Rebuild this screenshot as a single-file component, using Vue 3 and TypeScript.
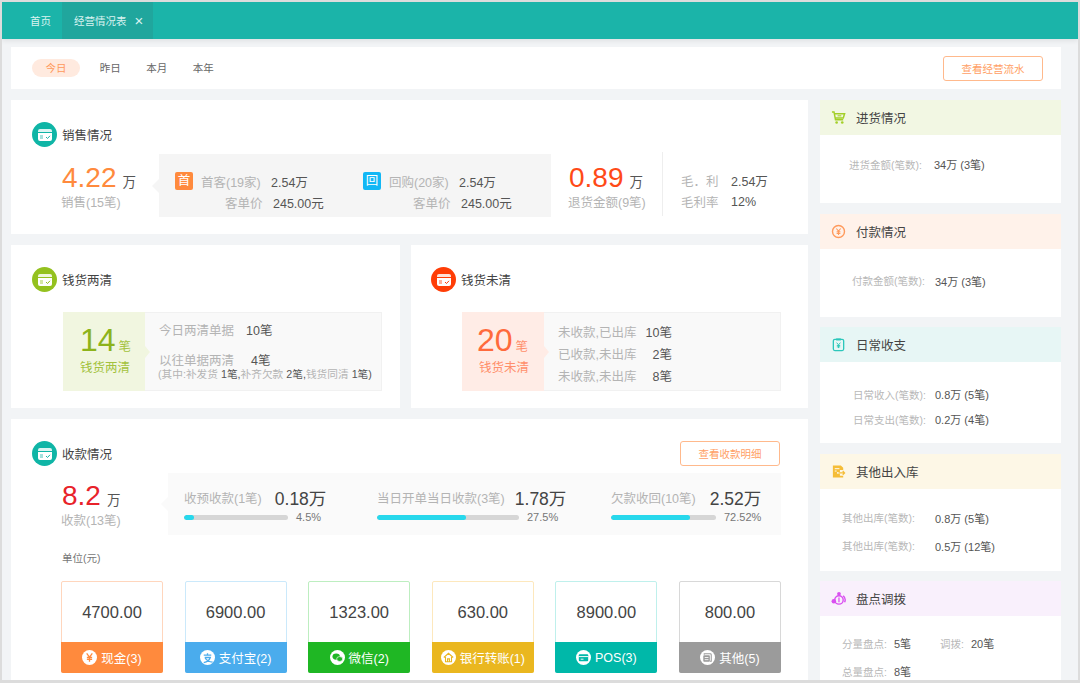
<script setup lang="ts">
interface Collect {
  label: string
  value: string
  percent: string
  fill: number
  kind: string
}

interface Pay {
  amount: string
  label: string
  kind: string
}

const collects: Collect[] = [
  { label: '收预收款(1笔)', value: '0.18万', percent: '4.5%', fill: 10, kind: 'one' },
  { label: '当日开单当日收款(3笔)', value: '1.78万', percent: '27.5%', fill: 63, kind: 'two' },
  { label: '欠款收回(10笔)', value: '2.52万', percent: '72.52%', fill: 75, kind: 'three' },
]

const pays: Pay[] = [
  { amount: '4700.00', label: '现金(3)', kind: 'cash' },
  { amount: '6900.00', label: '支付宝(2)', kind: 'ali' },
  { amount: '1323.00', label: '微信(2)', kind: 'wx' },
  { amount: '630.00', label: '银行转账(1)', kind: 'bank' },
  { amount: '8900.00', label: 'POS(3)', kind: 'pos' },
  { amount: '800.00', label: '其他(5)', kind: 'other' },
]

const uncleared = [
  { label: '未收款,已出库', value: '10笔' },
  { label: '已收款,未出库', value: '2笔' },
  { label: '未收款,未出库', value: '8笔' },
]
</script>

<template>
  <div class="page">
    <header class="tabs">
      <span class="tab">首页</span>
      <span class="tab tab--active">经营情况表<i class="tab__close">×</i></span>
    </header>

    <div class="content">
      <section class="filter">
        <span class="filter__item filter__item--on">今日</span>
        <span class="filter__item">昨日</span>
        <span class="filter__item">本月</span>
        <span class="filter__item">本年</span>
        <button class="btn filter__btn" type="button">查看经营流水</button>
      </section>

      <div class="columns">
        <div class="main">
          <section class="card card--sales">
            <div class="title">
              <span class="title__icon title__icon--teal">
                <svg viewBox="0 0 14 12" width="14" height="12"><path d="M2 0h10a2 2 0 0 1 2 2v1H0V2a2 2 0 0 1 2-2z" fill="#fff" opacity=".85" /><path d="M0 4h14v6a2 2 0 0 1-2 2H2a2 2 0 0 1-2-2z" fill="#fff" /><path d="M2 7h3M2 9h3" stroke="#1bb4a9" stroke-width=".8" /><path d="M8 8l1.5 1.5L12 6.8" stroke="#1bb4a9" stroke-width="1" fill="none" /></svg>
              </span>
              销售情况
            </div>
            <div class="sales">
              <div class="stat stat--sale">
                <div class="stat__num"><b class="c-orange">4.22</b><span>万</span></div>
                <div class="stat__sub">销售(15笔)</div>
              </div>
              <div class="mix has-arrow">
                <div class="mix__col">
                  <div class="mix__top">
                    <span class="mix__badge mix__badge--orange">首</span>
                    <span class="mix__label">首客(19家)</span>
                    <span class="val">2.54万</span>
                  </div>
                  <div class="mix__bottom"><span class="mix__price">客单价</span><span class="val">245.00元</span></div>
                </div>
                <div class="mix__col">
                  <div class="mix__top">
                    <span class="mix__badge mix__badge--blue">回</span>
                    <span class="mix__label">回购(20家)</span>
                    <span class="val">2.54万</span>
                  </div>
                  <div class="mix__bottom"><span class="mix__price">客单价</span><span class="val">245.00元</span></div>
                </div>
              </div>
              <div class="stat stat--back">
                <div class="stat__num"><b class="c-red">0.89</b><span>万</span></div>
                <div class="stat__sub">退货金额(9笔)</div>
              </div>
              <div class="gross">
                <div class="gross__row"><span class="gross__label">毛．利</span><span class="val">2.54万</span></div>
                <div class="gross__row"><span class="gross__label">毛利率</span><span class="val">12%</span></div>
              </div>
            </div>
          </section>

          <div class="pair">
            <section class="card card--clear">
              <div class="title">
                <span class="title__icon title__icon--green">
                  <svg viewBox="0 0 14 12" width="14" height="12"><path d="M2 0h10a2 2 0 0 1 2 2v1H0V2a2 2 0 0 1 2-2z" fill="#fff" opacity=".85" /><path d="M0 4h14v6a2 2 0 0 1-2 2H2a2 2 0 0 1-2-2z" fill="#fff" /><path d="M2 7h3M2 9h3" stroke="#94c11f" stroke-width=".8" /><path d="M8 8l1.5 1.5L12 6.8" stroke="#94c11f" stroke-width="1" fill="none" /></svg>
                </span>
                钱货两清
              </div>
              <div class="box">
                <div class="box__lead box__lead--green">
                  <div class="box__num"><b>14</b><span>笔</span></div>
                  <div class="box__name">钱货两清</div>
                </div>
                <div class="box__body box__body--clear">
                  <div class="line"><span class="line__label">今日两清单据</span><span class="val line__val">10笔</span></div>
                  <div class="line line--old"><span class="line__label">以往单据两清</span><span class="val line__val line__val--far">4笔</span></div>
                  <div class="note">(其中:补发货 <em>1笔,</em>补齐欠款 <em>2笔,</em>钱货同清 <em>1笔)</em></div>
                </div>
              </div>
            </section>

            <section class="card card--unclear">
              <div class="title">
                <span class="title__icon title__icon--red">
                  <svg viewBox="0 0 14 12" width="14" height="12"><path d="M2 0h10a2 2 0 0 1 2 2v1H0V2a2 2 0 0 1 2-2z" fill="#fff" opacity=".85" /><path d="M0 4h14v6a2 2 0 0 1-2 2H2a2 2 0 0 1-2-2z" fill="#fff" /><path d="M2 7h3M2 9h3" stroke="#ff3d06" stroke-width=".8" /><path d="M8 8l1.5 1.5L12 6.8" stroke="#ff3d06" stroke-width="1" fill="none" /></svg>
                </span>
                钱货未清
              </div>
              <div class="box">
                <div class="box__lead box__lead--red">
                  <div class="box__num"><b>20</b><span>笔</span></div>
                  <div class="box__name">钱货未清</div>
                </div>
                <div class="box__body box__body--unclear">
                  <div v-for="row in uncleared" :key="row.label" class="urow">
                    <span class="line__label">{{ row.label }}</span>
                    <span class="val urow__val">{{ row.value }}</span>
                  </div>
                </div>
              </div>
            </section>
          </div>

          <section class="card card--collect">
            <div class="title">
              <span class="title__icon title__icon--teal">
                <svg viewBox="0 0 14 12" width="14" height="12"><path d="M2 0h10a2 2 0 0 1 2 2v1H0V2a2 2 0 0 1 2-2z" fill="#fff" opacity=".85" /><path d="M0 4h14v6a2 2 0 0 1-2 2H2a2 2 0 0 1-2-2z" fill="#fff" /><path d="M2 7h3M2 9h3" stroke="#1bb4a9" stroke-width=".8" /><path d="M8 8l1.5 1.5L12 6.8" stroke="#1bb4a9" stroke-width="1" fill="none" /></svg>
              </span>
              收款情况
              <button class="btn title__btn" type="button">查看收款明细</button>
            </div>
            <div class="income">
              <div class="stat stat--income">
                <div class="stat__num"><b class="c-crimson">8.2</b><span>万</span></div>
                <div class="stat__sub">收款(13笔)</div>
              </div>
              <div class="progress has-arrow">
                <div v-for="c in collects" :key="c.label" class="prog" :class="`prog--${c.kind}`">
                  <div class="prog__top">
                    <span class="prog__label">{{ c.label }}</span>
                    <span class="prog__val">{{ c.value }}</span>
                  </div>
                  <div class="prog__bottom">
                    <span class="prog__bar"><i :style="{ width: c.fill + '%' }"></i></span>
                    <span class="prog__pct">{{ c.percent }}</span>
                  </div>
                </div>
              </div>
            </div>
            <div class="unit">单位(元)</div>
            <div class="pays">
              <div v-for="p in pays" :key="p.kind" class="pay" :class="`pay--${p.kind}`">
                <div class="pay__amount">{{ p.amount }}</div>
                <div class="pay__foot">
                  <svg class="pay__icon" viewBox="0 0 16 16" width="15" height="15">
                    <circle cx="8" cy="8" r="8" fill="#fff" />
                    <path v-if="p.kind === 'cash'" d="M5 3.5L8 7.5L11 3.5M8 7.5V12.5M5.2 8h5.6M5.2 10h5.6" stroke="#ff8a3d" stroke-width="1.4" fill="none" />
                    <path v-else-if="p.kind === 'ali'" d="M4 5.5h8M8 3.5v2M5 8h6c-1 3-3.5 4.8-7 5.5M5.5 8.5c1.5 2.5 4 4 8 4.5" stroke="#4aaced" stroke-width="1.4" fill="none" />
                    <g v-else-if="p.kind === 'wx'" fill="#1fb724">
                      <ellipse cx="6.6" cy="7" rx="4" ry="3.3" />
                      <ellipse cx="10.3" cy="9.6" rx="3.2" ry="2.6" stroke="#fff" stroke-width=".7" />
                    </g>
                    <path v-else-if="p.kind === 'bank'" d="M3 8l5-4.5L13 8M4.8 7.5V12.5H11.2V7.5M7 12.5V9.5H9V12.5" stroke="#eab71f" stroke-width="1.2" fill="none" />
                    <g v-else-if="p.kind === 'pos'">
                      <rect x="3" y="4.5" width="10" height="7.5" rx="1" fill="#00b8a9" />
                      <path d="M3 7h10" stroke="#fff" stroke-width="1" />
                      <path d="M5 9.8h3" stroke="#fff" stroke-width="1" />
                    </g>
                    <g v-else>
                      <path d="M4.5 5V4h6.5a1 1 0 0 1 1 1v7h-1.5" stroke="#9b9b9b" stroke-width="1.1" fill="none" />
                      <rect x="3.5" y="5.5" width="7" height="7" rx="1" fill="#9b9b9b" />
                      <path d="M5 8h4M5 10.3h4" stroke="#fff" stroke-width=".9" />
                    </g>
                  </svg>
                  {{ p.label }}
                </div>
              </div>
            </div>
          </section>
        </div>

        <aside class="side">
          <section class="scard scard--buy">
            <div class="scard__head">
              <svg viewBox="0 0 16 16" width="15" height="15" class="scard__icon"><path d="M1 2h2.2l1.6 8.5h8.2M4 4h10.5l-1.4 4.6H4.8" stroke="#a3cf28" stroke-width="1.6" fill="none" /><path d="M7 6.2h4" stroke="#a3cf28" stroke-width="1.2" /><circle cx="6" cy="13.3" r="1.4" fill="#a3cf28" /><circle cx="12" cy="13.3" r="1.4" fill="#a3cf28" /></svg>
              进货情况
            </div>
            <div class="scard__body">
              <div class="srow"><span>进货金额(笔数):</span><b>34万 (3笔)</b></div>
            </div>
          </section>

          <section class="scard scard--payout">
            <div class="scard__head">
              <svg viewBox="0 0 16 16" width="15" height="15" class="scard__icon"><circle cx="8" cy="8" r="6.4" stroke="#ff9a5c" stroke-width="1.5" fill="none" /><path d="M5.7 4.8L8 7.6l2.3-2.8M8 7.6v4M6 8.3h4M6 10h4" stroke="#ff9a5c" stroke-width="1.1" fill="none" /></svg>
              付款情况
            </div>
            <div class="scard__body">
              <div class="srow"><span>付款金额(笔数):</span><b>34万 (3笔)</b></div>
            </div>
          </section>

          <section class="scard scard--daily">
            <div class="scard__head">
              <svg viewBox="0 0 16 16" width="15" height="15" class="scard__icon"><rect x="2.5" y="2.5" width="11" height="12" rx="1.6" stroke="#2cc7bb" stroke-width="1.4" fill="none" /><path d="M5.5 1.5h5v2.2h-5z" fill="#2cc7bb" /><path d="M6 6l2 2.4L10 6M8 8.4v3.4M6.2 9h3.6M6.2 10.5h3.6" stroke="#2cc7bb" stroke-width="1" fill="none" /></svg>
              日常收支
            </div>
            <div class="scard__body">
              <div class="srow"><span>日常收入(笔数):</span><b>0.8万 (5笔)</b></div>
              <div class="srow"><span>日常支出(笔数):</span><b>0.2万 (4笔)</b></div>
            </div>
          </section>

          <section class="scard scard--other">
            <div class="scard__head">
              <svg viewBox="0 0 16 16" width="15" height="15" class="scard__icon"><path d="M2 1.5h8.5L13 4v2.5H9.5v2H6.5v2h3v2H13V14.5H2z" fill="#f5bd37" /><path d="M4 5h5M4 7.500h2" stroke="#fff" stroke-width="1" /><path d="M8 9.500h6.500M12.500 7.500l2 2-2 2" stroke="#f5bd37" stroke-width="1.300" fill="none" /></svg>
              其他出入库
            </div>
            <div class="scard__body">
              <div class="srow"><span>其他出库(笔数):</span><b>0.8万 (5笔)</b></div>
              <div class="srow"><span>其他出库(笔数):</span><b>0.5万 (12笔)</b></div>
            </div>
          </section>

          <section class="scard scard--stock">
            <div class="scard__head">
              <svg viewBox="0 0 16 16" width="15" height="15" class="scard__icon"><circle cx="8.500" cy="3" r="2" fill="#d94ff0" /><circle cx="3" cy="11" r="2.400" fill="#d94ff0" /><circle cx="8.500" cy="9.500" r="4.500" stroke="#d94ff0" stroke-width="1.500" fill="none" /><path d="M13 5a6 6 0 0 1 1.500 7" stroke="#d94ff0" stroke-width="1.500" fill="none" /><path d="M8.500 7v5" stroke="#d94ff0" stroke-width="1.300" /></svg>
              盘点调拨
            </div>
            <div class="scard__body">
              <div class="srow">
                <span>分量盘点:</span><b>5笔</b>
                <span class="srow__more">调拨:</span><b>20笔</b>
              </div>
              <div class="srow"><span>总量盘点:</span><b>8笔</b></div>
            </div>
          </section>
        </aside>
      </div>
    </div>
  </div>
</template>

<style>
html,
body {
  margin: 0;
  overflow: hidden;
}
</style>

<style scoped>
.page {
  box-sizing: border-box;
  width: 1080px;
  height: 683px;
  overflow: hidden;
  border-style: solid;
  border-color: #dcdcdc;
  border-width: 2px 2px 3px 2px;
  background: #f2f4f6;
  font-family: "Liberation Sans", "Noto Sans CJK SC", sans-serif;
  color: #444;
  display: flex;
  flex-direction: column;
}

/* tabs */
.tabs {
  flex: none;
  height: 37px;
  background: #1bb4a9;
  display: flex;
  color: #d9f3f0;
  font-size: 10.5px;
  box-shadow: 0 2px 5px rgba(0, 0, 0, 0.08);
}
.tab {
  display: flex;
  align-items: center;
  padding: 0 11px 0 28px;
}
.tab--active {
  margin-left: 0;
  padding: 0 10px 0 12px;
  background: #20a69d;
}
.tab__close {
  font-style: normal;
  font-size: 15px;
  font-weight: 300;
  margin-left: 8px;
}

.content {
  flex: 1;
  min-height: 0;
  padding: 8px 17px 0 9px;
  display: flex;
  flex-direction: column;
  gap: 11px;
}

/* filter */
.filter {
  flex: none;
  height: 42px;
  background: #fff;
  display: flex;
  align-items: center;
  padding: 0 18px 0 21px;
  font-size: 10.5px;
  color: #666;
}
.filter__item {
  width: 46.500px;
  line-height: 18px;
  text-align: center;
}
.filter__item--on {
  width: 48px;
  margin-right: 0;
  background: #ffeadf;
  border-radius: 9px;
  color: #ff9a5c;
}
.filter__item--on + .filter__item {
  margin-left: 7px;
}
.filter__btn {
  margin-left: auto;
}

.btn {
  box-sizing: border-box;
  width: 100px;
  height: 25px;
  border: 1px solid #ffb98c;
  border-radius: 3px;
  background: #fff;
  color: #ff9f66;
  font: inherit;
  font-size: 10.500px;
  padding: 0;
}

.columns {
  flex: 1;
  min-height: 0;
  display: flex;
  gap: 12px;
}
.main {
  width: 797px;
  display: flex;
  flex-direction: column;
  gap: 11px;
}
.side {
  width: 241px;
  display: flex;
  flex-direction: column;
  gap: 10.500px;
}

.card {
  background: #fff;
  box-sizing: border-box;
  padding: 22px 0 0 21px;
}
.card--sales {
  height: 134px;
  flex: none;
}
.pair {
  flex: none;
  height: 163px;
  display: flex;
  gap: 11px;
}
.card--clear {
  width: 389px;
}
.card--unclear {
  flex: 1;
  padding-left: 20px;
}
.card--collect {
  flex: 1;
  min-height: 0;
}

.title {
  height: 25px;
  display: flex;
  align-items: center;
  font-size: 12.500px;
  color: #444;
}
.title__icon {
  width: 25px;
  height: 25px;
  border-radius: 50%;
  margin-right: 5px;
  display: flex;
  align-items: center;
  justify-content: center;
}
.title__icon--teal {
  background: #0fb5a6;
}
.title__icon--green {
  background: #94c11f;
}
.title__icon--red {
  background: #ff3d06;
}
.title__btn {
  margin-left: auto;
  margin-right: 28px;
}

.val {
  color: #555;
  font-size: 12.500px;
  white-space: nowrap;
}

/* big stat */
.stat__num {
  display: flex;
  align-items: baseline;
  height: 32px;
  line-height: 32px;
}
.stat__num b {
  font-weight: 400;
  font-size: 28px;
}
.stat__num span {
  font-size: 13.500px;
  color: #555;
  margin-left: 6px;
}
.stat__sub {
  font-size: 12.500px;
  color: #b4b4b4;
  line-height: 18px;
  margin-left: -1px;
  white-space: nowrap;
}
.c-orange {
  color: #ff8a3d;
}
.c-red {
  color: #ff4a17;
}
.c-crimson {
  color: #e8222a;
}

.sales {
  display: flex;
  margin-top: 7px;
  height: 63px;
}
.stat--sale {
  width: 127px;
  padding: 8px 0 0 30px;
  box-sizing: border-box;
}
.has-arrow {
  position: relative;
}
.has-arrow::before {
  content: "";
  position: absolute;
  left: -7px;
  top: 50%;
  margin-top: -7px;
  border-style: solid;
  border-width: 7px 7px 7px 0;
  border-color: transparent #f5f5f5 transparent transparent;
}
.mix {
  width: 392px;
  background: #f5f5f5;
  display: flex;
  box-sizing: border-box;
  padding: 18px 0 0 16px;
}
.mix__col {
  width: 196px;
}
.mix__top {
  display: flex;
  align-items: center;
  height: 18px;
}
.mix__badge {
  width: 18px;
  height: 18px;
  border-radius: 2px;
  color: #fff;
  font-size: 12.500px;
  line-height: 18px;
  text-align: center;
  margin-right: 8px;
}
.mix__badge--orange {
  background: #ff8a3d;
}
.mix__badge--blue {
  background: #12b7f5;
}
.mix__label {
  width: 70px;
  font-size: 12.500px;
  color: #b4b4b4;
  white-space: nowrap;
}
.mix__bottom {
  display: flex;
  align-items: center;
  padding: 3px 0 0 50px;
}
.mix__price {
  width: 48px;
  font-size: 12.500px;
  color: #b4b4b4;
}
.stat--back {
  width: 111px;
  box-sizing: border-box;
  padding: 8px 0 0 18px;
}
.gross {
  margin-top: -2px;
  height: 64px;
  border-left: 1px solid #eee;
  padding: 18px 0 0 18px;
  box-sizing: border-box;
}
.gross__row {
  display: flex;
  align-items: center;
  height: 21px;
}
.gross__label {
  width: 50px;
  font-size: 12.500px;
  color: #b4b4b4;
}

/* clear boxes */
.box {
  display: flex;
  width: 319px;
  height: 79px;
  margin: 20px 0 0 31px;
  background: #f9f9f9;
  outline: 1px solid #f1f1f1;
  outline-offset: -1px;
}
.box__lead {
  position: relative;
  width: 82px;
  box-sizing: border-box;
  padding: 9px 0 0 17px;
}
.box__lead::after {
  content: "";
  position: absolute;
  right: -5px;
  top: 50%;
  margin-top: -6px;
  border-style: solid;
  border-width: 6px 0 6px 5px;
  border-color: transparent;
}
.box__lead--green {
  background: #f1f6e0;
  color: #a3c23d;
}
.box__lead--green::after {
  border-left-color: #f1f6e0;
}
.box__lead--red {
  background: #ffece6;
  color: #ff8f6b;
  padding-left: 15px;
}
.box__lead--red::after {
  border-left-color: #ffece6;
}
.box__num {
  display: flex;
  align-items: baseline;
  height: 38px;
  line-height: 38px;
}
.box__num b {
  font-weight: 400;
  font-size: 32px;
}
.box__lead--green b {
  color: #8db31b;
}
.box__lead--red b {
  color: #ff6a3c;
}
.box__num span {
  font-size: 12.500px;
  margin-left: 3px;
}
.box__name {
  font-size: 12.500px;
  line-height: 18px;
  white-space: nowrap;
}
.box__lead--red .box__name {
  padding-left: 2px;
}
.box__body {
  flex: 1;
  box-sizing: border-box;
}
.box__body--clear {
  padding: 8px 0 0 14px;
}
.box__body--unclear {
  padding: 8px 0 0 14px;
}
.line {
  display: flex;
  align-items: center;
  height: 18px;
}
.line--old {
  margin-top: 12px;
}
.line__label {
  font-size: 12.500px;
  color: #b4b4b4;
  white-space: nowrap;
}
.line__val {
  margin-left: 12px;
}
.line__val--far {
  margin-left: 17px;
}
.note {
  font-size: 10.700px;
  color: #b4b4b4;
  line-height: 12px;
  margin-left: -1px;
  white-space: nowrap;
}
.note em {
  font-style: normal;
  color: #555;
}
.urow {
  display: flex;
  align-items: center;
  height: 22px;
  width: 114px;
  justify-content: space-between;
}
.urow__val {
  text-align: right;
}

/* collect */
.income {
  display: flex;
  margin-top: 7px;
  height: 62px;
}
.stat--income {
  width: 136px;
  box-sizing: border-box;
  padding: 7px 0 0 30px;
}
.progress {
  width: 613px;
  background: #fafafa;
  display: flex;
  box-sizing: border-box;
  padding: 12px 0 0 16px;
}
.has-arrow.progress::before {
  border-right-color: #fafafa;
}
.prog {
  display: flex;
  flex-direction: column;
}
.prog--one {
  width: 193px;
}
.prog--two {
  width: 234px;
}
.prog--three {
  width: 152px;
}
.prog__top {
  display: flex;
  align-items: center;
  height: 24px;
}
.prog__label {
  font-size: 12.500px;
  color: #b4b4b4;
  white-space: nowrap;
}
.prog__val {
  font-size: 17.500px;
  color: #444;
  white-space: nowrap;
}
.prog--one .prog__val {
  margin-left: 13px;
}
.prog--two .prog__val {
  margin-left: 10px;
}
.prog--three .prog__val {
  margin-left: 14px;
}
.prog__bottom {
  display: flex;
  align-items: center;
  height: 16px;
}
.prog__bar {
  height: 5px;
  border-radius: 3px;
  background: #d6d6d6;
  overflow: hidden;
}
.prog__bar i {
  display: block;
  height: 100%;
  background: #27d8ec;
  border-radius: 3px;
}
.prog--one .prog__bar {
  width: 104px;
}
.prog--two .prog__bar {
  width: 142px;
}
.prog--three .prog__bar {
  width: 105px;
}
.prog__pct {
  font-size: 11px;
  color: #777;
  margin-left: 8px;
}
.unit {
  margin: 15px 0 0 30px;
  font-size: 10.500px;
  line-height: 16px;
  color: #777;
}
.pays {
  display: flex;
  justify-content: space-between;
  width: 720px;
  margin: 15px 0 0 29px;
}
.pay {
  box-sizing: border-box;
  width: 102px;
  height: 92px;
  border: 1px solid;
  border-radius: 2px;
  display: flex;
  flex-direction: column;
}
.pay__amount {
  flex: 1;
  display: flex;
  align-items: center;
  justify-content: center;
  font-size: 16.500px;
  color: #444;
}
.pay__foot {
  flex: none;
  height: 31px;
  margin: 0 -1px -1px;
  border-radius: 0 0 2px 2px;
  display: flex;
  align-items: center;
  justify-content: center;
  gap: 4px;
  color: #fff;
  font-size: 12.500px;
}
.pay--cash {
  border-color: #ffd6bd;
}
.pay--cash .pay__foot {
  background: #ff8a3d;
}
.pay--ali {
  border-color: #cbe9fb;
}
.pay--ali .pay__foot {
  background: #4aaced;
}
.pay--wx {
  border-color: #bdeec0;
}
.pay--wx .pay__foot {
  background: #1fb724;
}
.pay--bank {
  border-color: #fde8bd;
}
.pay--bank .pay__foot {
  background: #eab71f;
}
.pay--pos {
  border-color: #bff0ec;
}
.pay--pos .pay__foot {
  background: #00b8a9;
}
.pay--other {
  border-color: #d8d8d8;
}
.pay--other .pay__foot {
  background: #9b9b9b;
}

/* right column */
.scard {
  background: #fff;
  flex: none;
  height: 103px;
}
.scard--daily {
  height: 116px;
}
.scard--other {
  height: 117px;
}
.scard--stock {
  flex: 1;
  height: auto;
}
.scard__head {
  height: 35px;
  display: flex;
  align-items: center;
  font-size: 12.500px;
  color: #444;
  padding-left: 11px;
}
.scard__icon {
  margin-right: 10px;
}
.scard--buy .scard__head {
  background: #f2f7e3;
}
.scard--payout .scard__head {
  background: #fff2ea;
}
.scard--daily .scard__head {
  background: #e7f6f5;
}
.scard--other .scard__head {
  background: #fdf7e6;
}
.scard--stock .scard__head {
  background: #f9f0fc;
}
.scard__body {
  display: flex;
  flex-direction: column;
}
.srow {
  display: flex;
  align-items: center;
  height: 18px;
  white-space: nowrap;
}
.srow span {
  font-size: 10.500px;
  color: #b8b8b8;
}
.srow b {
  font-weight: 400;
  font-size: 11px;
  color: #555;
}
.scard--buy .scard__body {
  padding: 20px 0 0 29px;
}
.scard--buy .srow span {
  width: 85px;
}
.scard--payout .scard__body {
  padding: 23px 0 0 32px;
}
.scard--payout .srow span {
  width: 83px;
}
.scard--daily .scard__body {
  padding: 23px 0 0 33px;
  gap: 7px;
}
.scard--daily .srow span {
  width: 82px;
}
.scard--other .scard__body {
  padding: 20px 0 0 22px;
  gap: 10px;
}
.scard--other .srow span {
  width: 93px;
}
.scard--stock .scard__body {
  padding: 18px 0 0 22px;
  gap: 10px;
}
.scard--stock .srow span {
  width: 52px;
}
.scard--stock .srow b {
  width: 46px;
}
.scard--stock .srow .srow__more {
  width: 31px;
}
</style>
